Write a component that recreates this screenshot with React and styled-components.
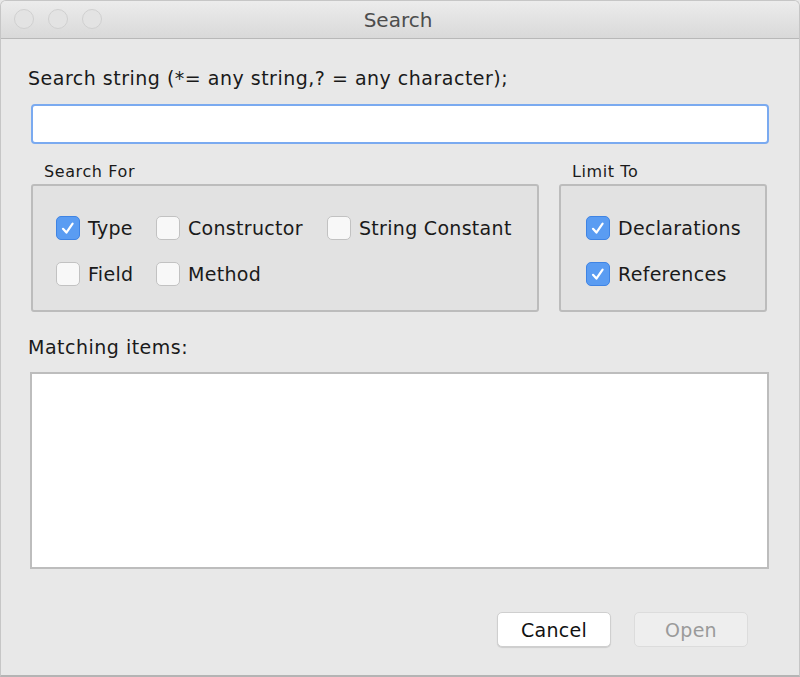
import styled, { createGlobalStyle } from 'styled-components'

const Global = createGlobalStyle`
	html, body {
		margin: 0;
		padding: 0;
		background: #e8e8e8;
	}
	body {
		font-family: "DejaVu Sans", Verdana, sans-serif;
		color: #1a1a1a;
	}
`

const Check = ({ checked, label }) => (
	<Option>
		<Box checked={checked}>
			{checked && (
				<svg width="18" height="18" viewBox="0 0 18 18">
					<path d="M4 9.8 L7.4 13.6 L13.6 4.6" fill="none" stroke="#fff" strokeWidth="2.2" strokeLinecap="round" strokeLinejoin="round" />
				</svg>
			)}
		</Box>
		{label}
	</Option>
)

export default () => (
	<>
		<Global />
		<Window>
			<TitleBar>
				<Lights>
					<Light />
					<Light />
					<Light />
				</Lights>
				<Title>Search</Title>
			</TitleBar>
			<Content>
				<Label>Search string (*= any string,? = any character);</Label>
				<SearchInput type="text" />
				<Groups>
					<Group width="508px">
						<GroupTitle>Search For</GroupTitle>
						<GroupBox cols="100px 171px auto" padLeft="23px">
							<Check checked label="Type" />
							<Check label="Constructor" />
							<Check label="String Constant" />
							<Check label="Field" />
							<Check label="Method" />
						</GroupBox>
					</Group>
					<Group width="208px">
						<GroupTitle>Limit To</GroupTitle>
						<GroupBox cols="auto" padLeft="25px">
							<Check checked label="Declarations" />
							<Check checked label="References" />
						</GroupBox>
					</Group>
				</Groups>
				<Label top="22px">Matching items:</Label>
				<ResultList />
				<Buttons>
					<Button>Cancel</Button>
					<Button disabled>Open</Button>
				</Buttons>
			</Content>
		</Window>
	</>
)

const Window = styled.div`
	box-sizing: border-box;
	width: 800px;
	height: 677px;
	display: flex;
	flex-direction: column;
	background: #e8e8e8;
	border: 1px solid #c6c6c6;
	border-bottom: 2px solid #b4b4b4;
	border-radius: 6px 6px 0 0;
	overflow: hidden;
`

const TitleBar = styled.div`
	position: relative;
	height: 37px;
	flex: none;
	display: flex;
	align-items: center;
	justify-content: center;
	background: linear-gradient(#ececec, #d9d9d9);
	border-bottom: 1px solid #b8b8b8;
`

const Lights = styled.div`
	position: absolute;
	left: 13px;
	top: 8px;
	display: flex;
	gap: 14px;
`

const Light = styled.span`
	box-sizing: border-box;
	width: 20px;
	height: 20px;
	border-radius: 50%;
	background: #e3e3e3;
	border: 1px solid #d0d0d0;
`

const Title = styled.div`
	font-size: 20px;
	color: #4d4d4d;
	margin-left: -4px;
`

const Content = styled.div`
	flex: 1;
	display: flex;
	flex-direction: column;
	padding: 26px 31px 0 27px;
`

const Label = styled.div`
	font-size: 19px;
	line-height: 26px;
	letter-spacing: 0.5px;
	margin-top: ${p => p.top || '0'};
`

const SearchInput = styled.input`
	box-sizing: border-box;
	height: 40px;
	margin: 13px 0 0 3px;
	width: calc(100% - 2px);
	border: 2px solid #7aaaf0;
	border-radius: 4px;
	background: #fff;
	outline: none;
	font: inherit;
	font-size: 18px;
`

const Groups = styled.div`
	display: flex;
	gap: 20px;
	margin: 16px 0 0 3px;
`

const Group = styled.div`
	width: ${p => p.width};
	display: flex;
	flex-direction: column;
`

const GroupTitle = styled.div`
	font-size: 16px;
	line-height: 20px;
	letter-spacing: 0.6px;
	padding: 2px 0 0 13px;
	margin-bottom: 2px;
`

const GroupBox = styled.div`
	box-sizing: border-box;
	height: 128px;
	display: grid;
	grid-template-columns: ${p => p.cols};
	grid-auto-rows: 46px;
	align-content: start;
	padding: 21px 0 0 ${p => p.padLeft};
	background: #e2e2e2;
	border: 2px solid #bcbcbc;
	border-radius: 3px;
`

const Option = styled.label`
	display: flex;
	align-items: center;
	gap: 8px;
	font-size: 19px;
	letter-spacing: 0.3px;
	height: 46px;
	align-self: start;
	margin-top: -2px;
`

const Box = styled.span`
	box-sizing: border-box;
	width: 24px;
	height: 24px;
	flex: none;
	display: flex;
	align-items: center;
	justify-content: center;
	border-radius: 5px;
	background: ${p => (p.checked ? '#5a9cf2' : '#f8f8f8')};
	border: 1px solid ${p => (p.checked ? '#3f84e4' : '#c2c2c2')};
`

const ResultList = styled.div`
	box-sizing: border-box;
	height: 197px;
	margin: 12px -1px 0 2px;
	background: #fff;
	border: 2px solid #bdbdbd;
`

const Buttons = styled.div`
	display: flex;
	justify-content: flex-end;
	gap: 23px;
	margin: 43px 20px 0 0;
`

const Button = styled.button`
	box-sizing: border-box;
	width: 114px;
	height: 35px;
	font-family: "DejaVu Sans", Verdana, sans-serif;
	font-size: 19px;
	letter-spacing: 0.3px;
	border-radius: 5px;
	border: 1px solid ${p => (p.disabled ? '#dcdcdc' : '#cfcfcf')};
	background: ${p => (p.disabled ? '#eeeeee' : '#ffffff')};
	color: ${p => (p.disabled ? '#9a9a9a' : '#111')};
	box-shadow: ${p => (p.disabled ? 'none' : '0 1px 1px rgba(0,0,0,0.12)')};
`
